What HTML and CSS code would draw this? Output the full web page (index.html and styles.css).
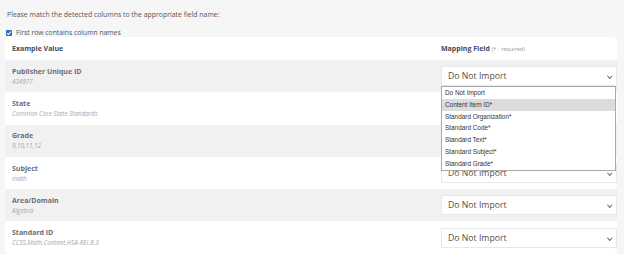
FILE: index.html
```html
<!DOCTYPE html>
<html>
<head>
<meta charset="utf-8">
<link rel="stylesheet" href="styles.css">
</head>
<body>
<div class="page">
  <p class="intro">Please match the detected columns to the appropriate field name:</p>
  <label class="check"><span class="box"><svg viewBox="0 0 8 8" width="6" height="6"><path d="M1.5 4.2 L3.3 6 L6.6 2.2" fill="none" stroke="#fff" stroke-width="1.4"/></svg></span>First row contains column names</label>
  <div class="card">
    <div class="head">
      <div class="col-a">Example Value</div>
      <div class="col-b">Mapping Field <span class="req">(* - required)</span></div>
    </div>
    <div class="row gray">
      <div class="col-a"><div class="title">Publisher Unique ID</div><div class="sub">434977</div></div>
      <div class="col-b"><div class="select">Do Not Import<span class="chev"></span></div></div>
    </div>
    <div class="row">
      <div class="col-a"><div class="title">State</div><div class="sub">Common Core State Standards</div></div>
      <div class="col-b"></div>
    </div>
    <div class="row gray">
      <div class="col-a"><div class="title">Grade</div><div class="sub">9,10,11,12</div></div>
      <div class="col-b"></div>
    </div>
    <div class="row">
      <div class="col-a"><div class="title">Subject</div><div class="sub">math</div></div>
      <div class="col-b"><div class="select">Do Not Import<span class="chev"></span></div></div>
    </div>
    <div class="row gray">
      <div class="col-a"><div class="title">Area/Domain</div><div class="sub">Algebra</div></div>
      <div class="col-b"><div class="select">Do Not Import<span class="chev"></span></div></div>
    </div>
    <div class="row">
      <div class="col-a"><div class="title">Standard ID</div><div class="sub">CCSS.Math.Content.HSA-REI.B.3</div></div>
      <div class="col-b"><div class="select">Do Not Import<span class="chev"></span></div></div>
    </div>
    <ul class="menu">
      <li>Do Not Import</li>
      <li class="hl">Content Item ID*</li>
      <li>Standard Organization*</li>
      <li>Standard Code*</li>
      <li>Standard Text*</li>
      <li>Standard Subject*</li>
      <li>Standard Grade*</li>
    </ul>
  </div>
</div>
</body>
</html>
```
FILE: styles.css
```css
html, body { margin: 0; padding: 0; }
body {
  background: #f6f6f7;
  font-family: "Open Sans", "DejaVu Sans", sans-serif;
  color: #555;
  width: 624px;
  height: 254px;
  overflow: hidden;
}
.page { padding-top: 10px; }
.intro {
  margin: 0 0 0 7px;
  font-size: 6.9px;
  line-height: 9px;
  color: #555;
}
.check {
  display: flex;
  align-items: center;
  gap: 4px;
  margin: 10px 0 0 6px;
  font-size: 6.8px;
  line-height: 8px;
  color: #555;
}
.box {
  width: 6px; height: 6px;
  background: #2b6cc4;
  border-radius: 1px;
  display: flex; align-items: center; justify-content: center;
}
.card {
  position: relative;
  margin: 0 0 0 5px;
  width: 612px;
  background: #fff;
  border-radius: 3px;
}
.head {
  display: flex;
  height: 23px;
  align-items: center;
  font-weight: 700;
  font-size: 7px;
  color: #4a4a55;
}
.head .col-b { padding-left: 7px; }
.req { font-weight: 400; font-size: 5.5px; color: #999; }
.col-a { flex: 0 0 429px; padding-left: 7px; box-sizing: border-box; }
.col-b { flex: 1; }
.row {
  display: flex;
  align-items: center;
  height: 32.3px;
}
.row.gray { background: #f1f1f2; }
.title { font-weight: 700; font-size: 7px; line-height: 10px; color: #6b6e7c; }
.sub { font-style: italic; font-size: 6.3px; line-height: 8px; color: #a6a6ae; margin-top: 1px; }
.select {
  position: relative;
  height: 20px;
  width: 176px;
  margin-left: 7px;
  box-sizing: border-box;
  background: #fff;
  border: 1px solid #e8e8ea;
  font-size: 8.7px;
  line-height: 18px;
  padding-left: 6px;
  color: #505050;
}
.chev {
  position: absolute;
  right: 5px; top: 7px;
  width: 2.5px; height: 2.5px;
  border-right: 0.8px solid #666;
  border-bottom: 0.8px solid #666;
  transform: rotate(45deg);
}
.menu {
  position: absolute;
  left: 436px;
  top: 49px;
  width: 175px;
  margin: 0; padding: 0;
  list-style: none;
  background: #fff;
  border: 1px solid #a8a8a8;
  box-sizing: border-box;
  font-family: "Liberation Sans", Arial, sans-serif;
  font-size: 6.4px;
  color: #333;
}
.menu li { height: 11.8px; line-height: 11.8px; padding-left: 3px; }
.menu li.hl { background: #dcdcdc; }
```
